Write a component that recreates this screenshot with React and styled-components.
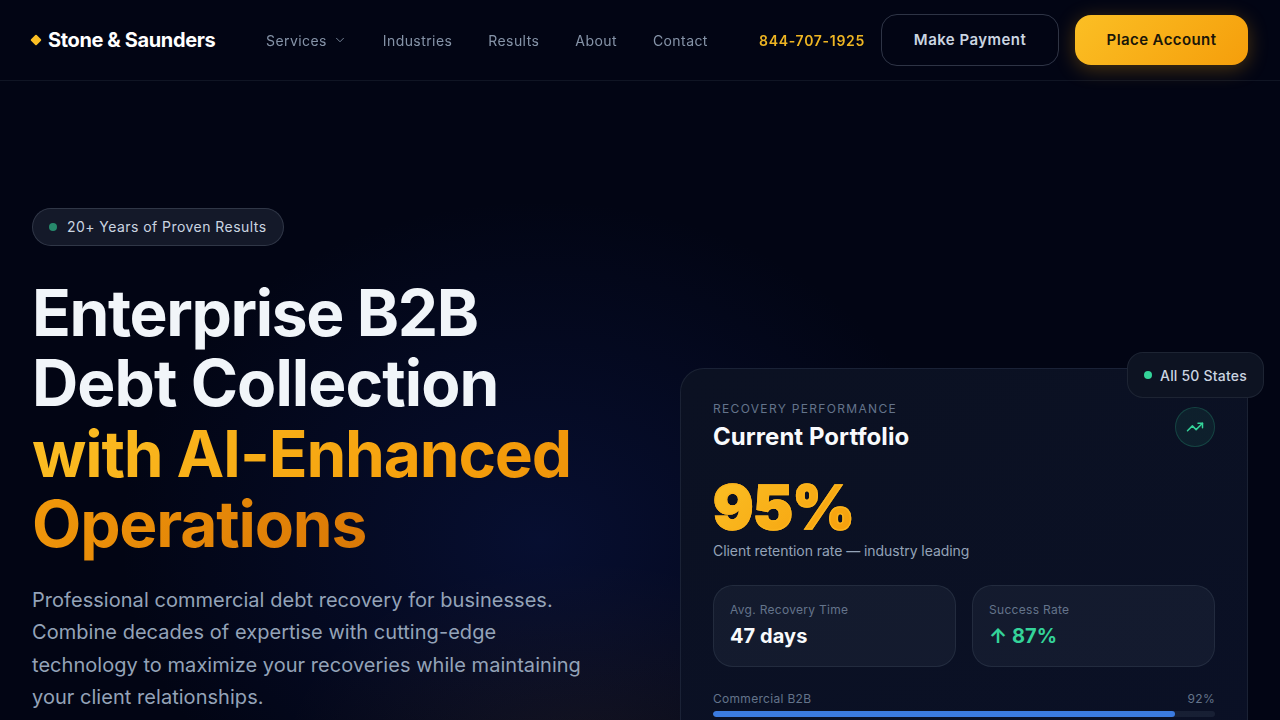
import React from "react";
import styled, { createGlobalStyle } from "styled-components";

const Global = createGlobalStyle`
  html, body { margin: 0; padding: 0; height: 720px; overflow: hidden; background: #030712; }
  * { box-sizing: border-box; }
  body { font-family: Inter, "Liberation Sans", sans-serif; color: #f8fafc; }
`;

const Page = styled.div`
  width: 1280px;
  height: 720px;
  overflow: hidden;
  background:
    radial-gradient(ellipse 420px 340px at 540px 540px, rgba(23, 46, 140, 0.24), transparent 100%),
    radial-gradient(ellipse 300px 200px at 580px 760px, rgba(245, 158, 11, 0.07), transparent 100%),
    #020514;
`;

const Header = styled.header`
  height: 81px;
  padding: 0 32px 0 30px;
  display: flex;
  align-items: center;
  border-bottom: 1px solid rgba(148, 163, 184, 0.1);
`;

const Logo = styled.div`
  display: flex;
  align-items: center;
  gap: 8px;
  width: 236px;
  font-size: 20px;
  font-weight: 700;
  letter-spacing: -0.37px;
  color: #fff;
`;

const Diamond = styled.span`
  width: 8px;
  height: 8px;
  margin-left: 2px;
  background: #fbbf24;
  border-radius: 1px;
  transform: rotate(45deg);
`;

const Nav = styled.nav`
  display: flex;
  align-items: center;
  gap: 36px;
  flex: 1;
`;

const NavLink = styled.a`
  display: flex;
  align-items: center;
  gap: 6px;
  font-size: 14px;
  font-weight: 400;
  letter-spacing: 0.42px;
  color: #94a3b8;
  opacity: 0.9;
`;

const Actions = styled.div`
  display: flex;
  align-items: center;
  gap: 16px;
`;

const Phone = styled.a`
  font-size: 14px;
  font-weight: 600;
  letter-spacing: 0.7px;
  color: #fbbf24;
  opacity: 0.95;
`;

const Button = styled.button`
  height: ${(p) => (p.$primary ? "50px" : "52px")};
  width: ${(p) => (p.$primary ? "173px" : "178px")};
  padding: 0 0 1px;
  border-radius: 16px;
  font-family: inherit;
  font-size: 15px;
  font-weight: 600;
  letter-spacing: ${(p) => (p.$primary ? "0.4px" : "0.45px")};
  border: ${(p) => (p.$primary ? "none" : "1px solid rgba(148, 163, 184, 0.3)")};
  color: ${(p) => (p.$primary ? "#1a1608" : "#cbd5e1")};
  background: ${(p) => (p.$primary ? "linear-gradient(135deg, #fbbf24, #f59e0b)" : "transparent")};
  box-shadow: ${(p) => (p.$primary ? "0 4px 20px rgba(245, 158, 11, 0.3)" : "none")};
`;

const Hero = styled.main`
  display: grid;
  grid-template-columns: 568px 568px;
  gap: 80px;
  padding: 127px 32px 0;
`;

const Left = styled.section`
  display: flex;
  flex-direction: column;
  align-items: flex-start;
`;

const Badge = styled.div`
  display: flex;
  align-items: center;
  gap: 10px;
  height: 38px;
  padding: 0 16px 1px;
  border-radius: 19px;
  background: rgba(148, 163, 184, 0.13);
  border: 1px solid rgba(148, 163, 184, 0.22);
  font-size: 14px;
  font-weight: 400;
  letter-spacing: 0.45px;
  color: #cbd5e1;
`;

const Dot = styled.span`
  width: 8px;
  height: 8px;
  border-radius: 50%;
  flex: none;
  background: #34d399;
  opacity: ${(p) => p.$dim || 1};
`;

const Title = styled.h1`
  margin: 32px 0 24px;
  font-size: 64px;
  line-height: 70.4px;
  font-weight: 700;
  letter-spacing: -1.34px;
  color: #f1f5f9;
`;

const WideLine = styled.span`
  letter-spacing: -0.92px;
`;

const Accent = styled.span`
  letter-spacing: -1.17px;
  background: linear-gradient(135deg, #fbbf24 0%, #f59e0b 50%, #d97706 100%);
  -webkit-background-clip: text;
  background-clip: text;
  color: transparent;
`;

const Lead = styled.p`
  margin: 0;
  width: 560px;
  font-size: 20px;
  line-height: 32.5px;
  letter-spacing: 0.04px;
  color: #94a3b8;
`;

const Right = styled.section`
  position: relative;
  margin-top: 160px;
`;

const Card = styled.div`
  height: 520px;
  padding: 32px;
  border-radius: 24px;
  border: 1px solid rgba(148, 163, 184, 0.12);
  background: linear-gradient(160deg, #0b1122, #0a1026);
`;

const Floating = styled.div`
  position: absolute;
  top: -16px;
  right: -16px;
  width: 137px;
  height: 46px;
  display: flex;
  align-items: center;
  gap: 8px;
  padding-left: 16px;
  border-radius: 16px;
  background: #0d1322;
  border: 1px solid rgba(148, 163, 184, 0.12);
  font-size: 14px;
  font-weight: 500;
  letter-spacing: 0.2px;
  color: #cbd5e1;
`;

const CardHead = styled.div`
  display: flex;
  justify-content: space-between;
  align-items: flex-start;
  margin-top: 1px;
`;

const Eyebrow = styled.div`
  font-size: 12px;
  line-height: 14px;
  font-weight: 400;
  letter-spacing: 1.32px;
  color: #64748b;
`;

const CardTitle = styled.div`
  margin-top: 5px;
  font-size: 24px;
  line-height: 32px;
  font-weight: 700;
  letter-spacing: 0.05px;
  color: #f8fafc;
`;

const IconCircle = styled.div`
  width: 40px;
  height: 40px;
  margin-top: 5px;
  border-radius: 50%;
  display: flex;
  align-items: center;
  justify-content: center;
  color: #34d399;
  background: rgba(52, 211, 153, 0.08);
  border: 1px solid rgba(52, 211, 153, 0.2);
`;

const BigValue = styled.div`
  margin-top: 21px;
  width: max-content;
  font-size: 60px;
  line-height: 66px;
  font-weight: 900;
  letter-spacing: -0.6px;
  -webkit-text-stroke: 1.4px #fbb31c;
  color: #fbbf24;
  background: linear-gradient(135deg, #fbbf24, #f59e0b);
  -webkit-background-clip: text;
  background-clip: text;
  -webkit-text-fill-color: transparent;
`;

const BigCaption = styled.div`
  margin-top: 1px;
  font-size: 14px;
  line-height: 20px;
  letter-spacing: -0.05px;
  color: #94a3b8;
`;

const Stats = styled.div`
  display: grid;
  grid-template-columns: 1fr 1fr;
  gap: 16px;
  margin-top: 24px;
`;

const Stat = styled.div`
  height: 82px;
  padding: 16px 16px;
  border-radius: 20px;
  background: rgba(148, 163, 184, 0.07);
  border: 1px solid rgba(148, 163, 184, 0.12);
`;

const StatLabel = styled.div`
  font-size: 12px;
  line-height: 16px;
  letter-spacing: 0.3px;
  color: #64748b;
`;

const StatValue = styled.div`
  margin-top: 4px;
  font-size: 20px;
  line-height: 28px;
  font-weight: 700;
  letter-spacing: 0.06px;
  color: ${(p) => p.$color || "#f8fafc"};
`;

const BarRow = styled.div`
  margin-top: 24px;
`;

const BarLabels = styled.div`
  display: flex;
  justify-content: space-between;
  font-size: 12px;
  line-height: 16px;
  letter-spacing: 0.3px;
  color: #64748b;
`;

const Track = styled.div`
  height: 6px;
  margin-top: 4px;
  border-radius: 3px;
  background: rgba(148, 163, 184, 0.1);
  overflow: hidden;
`;

const Fill = styled.div`
  height: 100%;
  border-radius: 3px;
  background: #3b7be0;
`;

export default function App() {
  return (
    <Page>
      <Global />
      <Header>
        <Logo>
          <Diamond />
          Stone &amp; Saunders
        </Logo>
        <Nav>
          <NavLink>
            Services
            <svg width="14" height="14" viewBox="0 0 24 24" fill="none" stroke="currentColor" strokeWidth="1.5" strokeLinecap="round" strokeLinejoin="round">
              <path d="m6 9 6 6 6-6" />
            </svg>
          </NavLink>
          <NavLink>Industries</NavLink>
          <NavLink>Results</NavLink>
          <NavLink>About</NavLink>
          <NavLink>Contact</NavLink>
        </Nav>
        <Actions>
          <Phone>844-707-1925</Phone>
          <Button>Make Payment</Button>
          <Button $primary>Place Account</Button>
        </Actions>
      </Header>
      <Hero>
        <Left>
          <Badge>
            <Dot $dim={0.6} />
            20+ Years of Proven Results
          </Badge>
          <Title>
            Enterprise B2B
            <br />
            <WideLine>Debt Collection</WideLine>
            <br />
            <Accent>
              with AI-Enhanced
              <br />
              Operations
            </Accent>
          </Title>
          <Lead>
            Professional commercial debt recovery for businesses. Combine decades of expertise with cutting-edge
            technology to maximize your recoveries while maintaining your client relationships.
          </Lead>
        </Left>
        <Right>
          <Floating>
            <Dot />
            All 50 States
          </Floating>
          <Card>
            <CardHead>
              <div>
                <Eyebrow>RECOVERY PERFORMANCE</Eyebrow>
                <CardTitle>Current Portfolio</CardTitle>
              </div>
              <IconCircle>
                <svg width="18" height="18" viewBox="0 0 24 24" fill="none" stroke="currentColor" strokeWidth="2" strokeLinecap="round" strokeLinejoin="round">
                  <path d="M22 7 13.5 15.5 8.5 10.5 2 17" />
                  <path d="M16 7h6v6" />
                </svg>
              </IconCircle>
            </CardHead>
            <BigValue>95%</BigValue>
            <BigCaption>Client retention rate — industry leading</BigCaption>
            <Stats>
              <Stat>
                <StatLabel>Avg. Recovery Time</StatLabel>
                <StatValue>47 days</StatValue>
              </Stat>
              <Stat>
                <StatLabel>Success Rate</StatLabel>
                <StatValue $color="#34d399">↑ 87%</StatValue>
              </Stat>
            </Stats>
            <BarRow>
              <BarLabels>
                <span>Commercial B2B</span>
                <span>92%</span>
              </BarLabels>
              <Track>
                <Fill style={{ width: "92%" }} />
              </Track>
            </BarRow>
          </Card>
        </Right>
      </Hero>
    </Page>
  );
}
